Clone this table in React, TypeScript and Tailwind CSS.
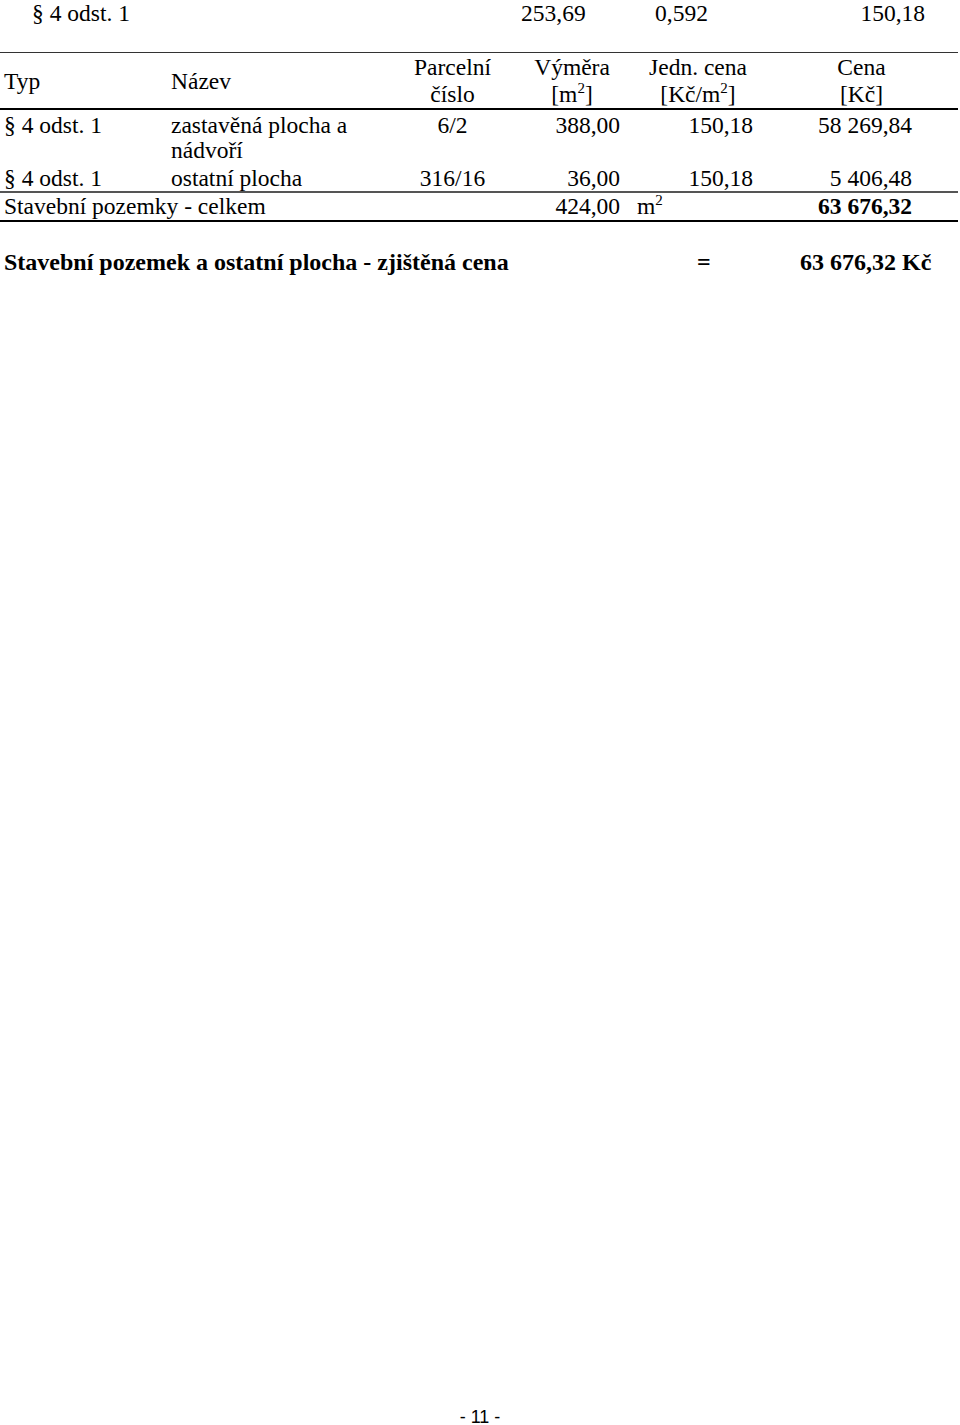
// @ts-nocheck
import React from "react";

const serif = { fontFamily: '"Liberation Serif", "Times New Roman", serif' };

// table columns: Typ | Název | Parcelní číslo | Výměra | Jedn. cena | Cena
const cols = "grid grid-cols-[167px_233px_105px_134px_122px_197px]";

function M2() {
  return (
    <>
      m<sup className="text-[15px] -top-[0.6em]">2</sup>
    </>
  );
}

export default function App() {
  return (
    <div className="w-[960px] min-h-[1425px] flex flex-col bg-white text-black" style={serif}>
      {/* top line carried over from previous page */}
      <div className="flex text-[23.5px] leading-[26px]">
        <div className="w-[521px] pl-[32px]">§ 4 odst. 1</div>
        <div className="w-[134px]">253,69</div>
        <div>0,592</div>
        <div className="ml-auto pr-[35px]">150,18</div>
      </div>

      {/* table */}
      <div className="mt-[26px] w-[958px] border-t border-[#333] text-[23.5px]">
        {/* header */}
        <div className={`${cols} pt-[1px] leading-[27px] border-b-2 border-black`}>
          <div className="pl-[4px] self-center">Typ</div>
          <div className="pl-[4px] self-center">Název</div>
          <div className="text-center">
            Parcelní
            <br />
            číslo
          </div>
          <div className="text-center">
            Výměra
            <br />[<M2 />]
          </div>
          <div className="text-center pr-[4px]">
            Jedn. cena
            <br />
            [Kč/<M2 />]
          </div>
          <div className="text-center pl-[4px]">
            Cena
            <br />
            [Kč]
          </div>
        </div>

        {/* rows */}
        <div className={`${cols} pt-[3px] leading-[25px]`}>
          <div className="pl-[4px]">§ 4 odst. 1</div>
          <div className="pl-[4px] pr-[30px]">zastavěná plocha a nádvoří</div>
          <div className="text-center">6/2</div>
          <div className="text-right pr-[19px]">388,00</div>
          <div className="text-right pr-[8px]">150,18</div>
          <div className="text-right pr-[46px]">58 269,84</div>
        </div>
        <div className={`${cols} pt-[3px] leading-[25px] border-b-2 border-[#555]`}>
          <div className="pl-[4px]">§ 4 odst. 1</div>
          <div className="pl-[4px]">ostatní plocha</div>
          <div className="text-center">316/16</div>
          <div className="text-right pr-[19px]">36,00</div>
          <div className="text-right pr-[8px]">150,18</div>
          <div className="text-right pr-[46px]">5 406,48</div>
        </div>
        <div className={`${cols} pt-[1px] pb-[1px] leading-[25px] border-b-2 border-black`}>
          <div className="col-span-3 pl-[4px]">Stavební pozemky - celkem</div>
          <div className="text-right pr-[19px]">424,00</div>
          <div className="-ml-[2px]">
            <M2 />
          </div>
          <div className="text-right pr-[46px] font-bold">63 676,32</div>
        </div>
      </div>

      {/* result */}
      <div className="mt-[27px] grid grid-cols-[697px_103px_1fr] text-[24px] leading-[26px] font-bold">
        <div className="pl-[4px]">Stavební pozemek a ostatní plocha - zjištěná cena</div>
        <div>=</div>
        <div>63 676,32 Kč</div>
      </div>

      {/* page number */}
      <div
        className="mt-auto text-center text-[18px] leading-[16px]"
        style={{ fontFamily: '"Liberation Sans", Arial, sans-serif' }}
      >
        - 11 -
      </div>
    </div>
  );
}
